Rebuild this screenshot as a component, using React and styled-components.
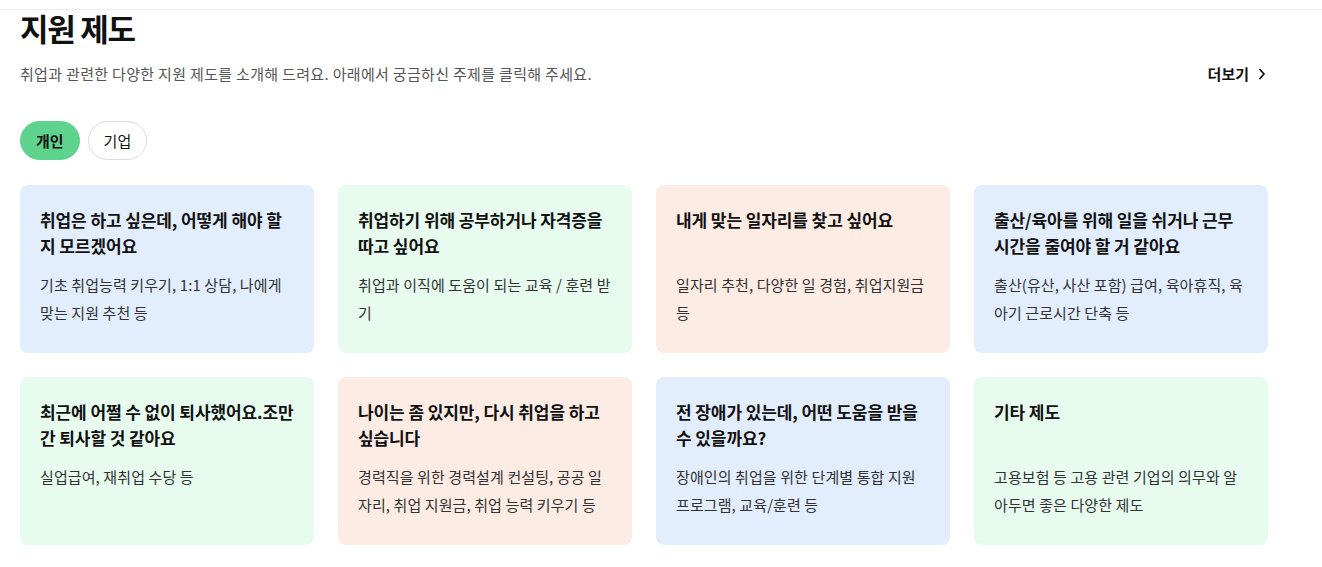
import styled, { createGlobalStyle } from "styled-components";

const GlobalStyle = createGlobalStyle`
  * { box-sizing: border-box; }
  body {
    margin: 0;
    background: #fff;
    font-family: "Noto Sans CJK KR", "Noto Sans", sans-serif;
    color: #111;
  }
`;

const TopLine = styled.div`
  height: 10px;
  border-bottom: 1px solid #ececec;
`;

const Wrapper = styled.section`
  width: 1268px;
  padding: 0 0 0 20px;
`;

const Title = styled.h1`
  margin: 0;
  font-size: 31px;
  line-height: 36px;
  font-weight: 700;
  letter-spacing: -1.3px;
  color: #111;
`;

const Head = styled.div`
  display: flex;
  align-items: center;
  justify-content: space-between;
  margin-top: 17px;
`;

const Sub = styled.p`
  margin: 0;
  font-size: 15px;
  letter-spacing: 0.32px;
  color: #555;
`;

const More = styled.a`
  display: flex;
  align-items: center;
  gap: 9px;
  font-size: 15px;
  font-weight: 700;
  color: #111;
  margin-right: 2px;
  cursor: pointer;
`;

const Tabs = styled.div`
  display: flex;
  gap: 8px;
  margin-top: 37px;
`;

const Tab = styled.button`
  height: 39px;
  padding: 0 15px;
  border-radius: 20px;
  font-family: inherit;
  font-size: 15px;
  font-weight: ${(p) => (p.$active ? 700 : 400)};
  color: #111;
  background: ${(p) => (p.$active ? "#5dd38d" : "#fff")};
  border: 1px solid ${(p) => (p.$active ? "#5dd38d" : "#dcdcdc")};
  cursor: pointer;
`;

const Grid = styled.div`
  display: grid;
  grid-template-columns: repeat(4, 294px);
  gap: 24px 24px;
  margin-top: 25px;
`;

const Card = styled.div`
  height: 168px;
  padding: 22px 20px 0;
  border-radius: 8px;
  background: ${(p) => p.$bg};
  word-break: break-all;
`;

const CardTitle = styled.h3`
  margin: 0;
  min-height: 52px;
  font-size: 17px;
  line-height: 26px;
  font-weight: 700;
  letter-spacing: -0.1px;
  color: #111;
`;

const CardText = styled.p`
  margin: 12px 0 0;
  font-size: 15px;
  line-height: 28px;
  letter-spacing: 0.1px;
  color: #333;
`;

const colors = {
  blue: "#e2edfd",
  green: "#e7fbef",
  peach: "#fdece4",
};

const cards = [
  {
    c: "blue",
    t: "취업은 하고 싶은데, 어떻게 해야 할 지 모르겠어요",
    d: "기초 취업능력 키우기, 1:1 상담, 나에게 맞는 지원 추천 등",
  },
  {
    c: "green",
    t: "취업하기 위해 공부하거나 자격증을 따고 싶어요",
    d: "취업과 이직에 도움이 되는 교육 / 훈련 받기",
  },
  {
    c: "peach",
    t: "내게 맞는 일자리를 찾고 싶어요",
    d: "일자리 추천, 다양한 일 경험, 취업지원금 등",
  },
  {
    c: "blue",
    t: "출산/육아를 위해 일을 쉬거나 근무 시간을 줄여야 할 거 같아요",
    d: "출산(유산, 사산 포함) 급여, 육아휴직, 육아기 근로시간 단축 등",
  },
  {
    c: "green",
    t: "최근에 어쩔 수 없이 퇴사했어요.조만간 퇴사할 것 같아요",
    d: "실업급여, 재취업 수당 등",
  },
  {
    c: "peach",
    t: "나이는 좀 있지만, 다시 취업을 하고 싶습니다",
    d: "경력직을 위한 경력설계 컨설팅, 공공 일자리, 취업 지원금, 취업 능력 키우기 등",
  },
  {
    c: "blue",
    t: "전 장애가 있는데, 어떤 도움을 받을 수 있을까요?",
    d: "장애인의 취업을 위한 단계별 통합 지원 프로그램, 교육/훈련 등",
  },
  {
    c: "green",
    t: "기타 제도",
    d: "고용보험 등 고용 관련 기업의 의무와 알아두면 좋은 다양한 제도",
  },
];

export default function App() {
  return (
    <>
      <GlobalStyle />
      <TopLine />
      <Wrapper>
        <Title>지원 제도</Title>
        <Head>
          <Sub>
            취업과 관련한 다양한 지원 제도를 소개해 드려요. 아래에서 궁금하신
            주제를 클릭해 주세요.
          </Sub>
          <More>
            더보기
            <svg width="8" height="12" viewBox="0 0 8 12" fill="none">
              <path
                d="M2 1.5 6 6l-4 4.5"
                stroke="#111"
                strokeWidth="1.8"
                strokeLinecap="round"
                strokeLinejoin="round"
              />
            </svg>
          </More>
        </Head>
        <Tabs>
          <Tab $active>개인</Tab>
          <Tab>기업</Tab>
        </Tabs>
        <Grid>
          {cards.map((card, i) => (
            <Card key={i} $bg={colors[card.c]}>
              <CardTitle>{card.t}</CardTitle>
              <CardText>{card.d}</CardText>
            </Card>
          ))}
        </Grid>
      </Wrapper>
    </>
  );
}
